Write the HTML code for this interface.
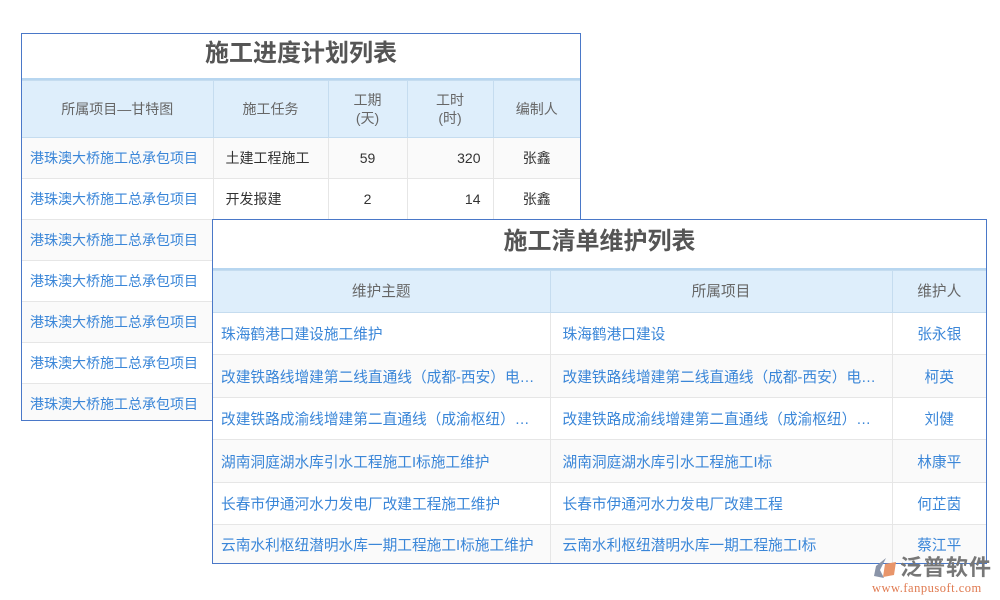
<!DOCTYPE html>
<html><head><meta charset="utf-8"><style>
*{margin:0;padding:0;box-sizing:border-box}
body{width:1000px;height:600px;background:#fff;position:relative;overflow:hidden;font-family:"Liberation Sans","Noto Sans CJK SC",sans-serif;font-size:14px;color:#333}
.t{position:absolute;border:1px solid #4a78c8;background:#fff;overflow:hidden}
table{border-collapse:collapse;width:100%;table-layout:fixed}
td,th{border:1px solid #e6e6e6;overflow:hidden;white-space:nowrap;text-overflow:ellipsis}
td:first-child,th:first-child{border-left:0}
td:last-child,th:last-child{border-right:0}
tr:last-child td{border-bottom:0}
th{background:#deeefb;color:#666;font-weight:normal;border-color:#c5dcef;line-height:18px}
.title{font-weight:bold;font-size:24px;color:#555;text-align:center}
.a{color:#3a86d8}
tr.g td{background:#fafafa}
.c{text-align:center}.r{text-align:right;padding-right:12px}.l{text-align:left;padding-left:8px}
.t2 td,.t2 th{font-size:14.7px}
</style></head><body>
<div class="t" style="left:21px;top:33px;width:560px;height:388px">
<div class="title" style="height:46px;line-height:40px;border-bottom:2px solid #b7d6f0">施工进度计划列表</div>
<table>
<colgroup><col style="width:191px"><col style="width:115px"><col style="width:79px"><col style="width:86px"><col></colgroup>
<tr style="height:57px"><th>所属项目—甘特图</th><th>施工任务</th><th>工期<br>(天)</th><th>工时<br>(时)</th><th>编制人</th></tr>
<tr class="g" style="height:41px"><td class="a l">港珠澳大桥施工总承包项目</td><td class="l" style="padding-left:12px">土建工程施工</td><td class="c">59</td><td class="r">320</td><td class="c">张鑫</td></tr>
<tr style="height:41px"><td class="a l">港珠澳大桥施工总承包项目</td><td class="l" style="padding-left:12px">开发报建</td><td class="c">2</td><td class="r">14</td><td class="c">张鑫</td></tr>
<tr class="g" style="height:41px"><td class="a l">港珠澳大桥施工总承包项目</td><td></td><td></td><td></td><td></td></tr>
<tr style="height:41px"><td class="a l">港珠澳大桥施工总承包项目</td><td></td><td></td><td></td><td></td></tr>
<tr class="g" style="height:41px"><td class="a l">港珠澳大桥施工总承包项目</td><td></td><td></td><td></td><td></td></tr>
<tr style="height:41px"><td class="a l">港珠澳大桥施工总承包项目</td><td></td><td></td><td></td><td></td></tr>
<tr class="g" style="height:40px"><td class="a l">港珠澳大桥施工总承包项目</td><td></td><td></td><td></td><td></td></tr>
</table></div>

<div class="t t2" style="left:212px;top:219px;width:775px;height:345px">
<div class="title" style="height:50px;line-height:44px;border-bottom:2px solid #b7d6f0">施工清单维护列表</div>
<table>
<colgroup><col style="width:337px"><col style="width:342px"><col></colgroup>
<tr style="height:42px"><th>维护主题</th><th>所属项目</th><th>维护人</th></tr>
<tr style="height:42px"><td class="a l">珠海鹤港口建设施工维护</td><td class="a l" style="padding-left:12px">珠海鹤港口建设</td><td class="a c">张永银</td></tr>
<tr class="g" style="height:43px"><td class="a l" style="padding-right:10px">改建铁路线增建第二线直通线（成都-西安）电力工程</td><td class="a l" style="padding-left:12px;padding-right:10px">改建铁路线增建第二线直通线（成都-西安）电力工程</td><td class="a c">柯英</td></tr>
<tr style="height:42px"><td class="a l" style="padding-right:10px">改建铁路成渝线增建第二直通线（成渝枢纽）工程</td><td class="a l" style="padding-left:12px;padding-right:10px">改建铁路成渝线增建第二直通线（成渝枢纽）工程</td><td class="a c">刘健</td></tr>
<tr class="g" style="height:43px"><td class="a l">湖南洞庭湖水库引水工程施工I标施工维护</td><td class="a l" style="padding-left:12px">湖南洞庭湖水库引水工程施工I标</td><td class="a c">林康平</td></tr>
<tr style="height:42px"><td class="a l">长春市伊通河水力发电厂改建工程施工维护</td><td class="a l" style="padding-left:12px">长春市伊通河水力发电厂改建工程</td><td class="a c">何芷茵</td></tr>
<tr class="g" style="height:40px"><td class="a l">云南水利枢纽潜明水库一期工程施工I标施工维护</td><td class="a l" style="padding-left:12px">云南水利枢纽潜明水库一期工程施工I标</td><td class="a c">蔡江平</td></tr>
</table></div>

<div style="position:absolute;left:870px;top:554px;width:130px;height:46px">
<svg style="position:absolute;left:2px;top:2px" width="32" height="28" viewBox="0 0 32 28">
<path d="M14 2 L4 10 L2 20 L12 22 L8 14 Z" fill="#8a94a8"/>
<path d="M13 8 L24 6 L22 19 L11 21 Z" fill="#e8956a"/>
</svg>
<div style="position:absolute;left:30px;top:1px;font-size:22px;color:#777;letter-spacing:1px;font-weight:bold;line-height:26px">泛普软件</div>
<div style="position:absolute;left:2px;top:27px;font-size:12.5px;color:#e07a50;font-family:'Liberation Serif',serif;letter-spacing:0.5px">www.fanpusoft.com</div>
</div>
</body></html>
